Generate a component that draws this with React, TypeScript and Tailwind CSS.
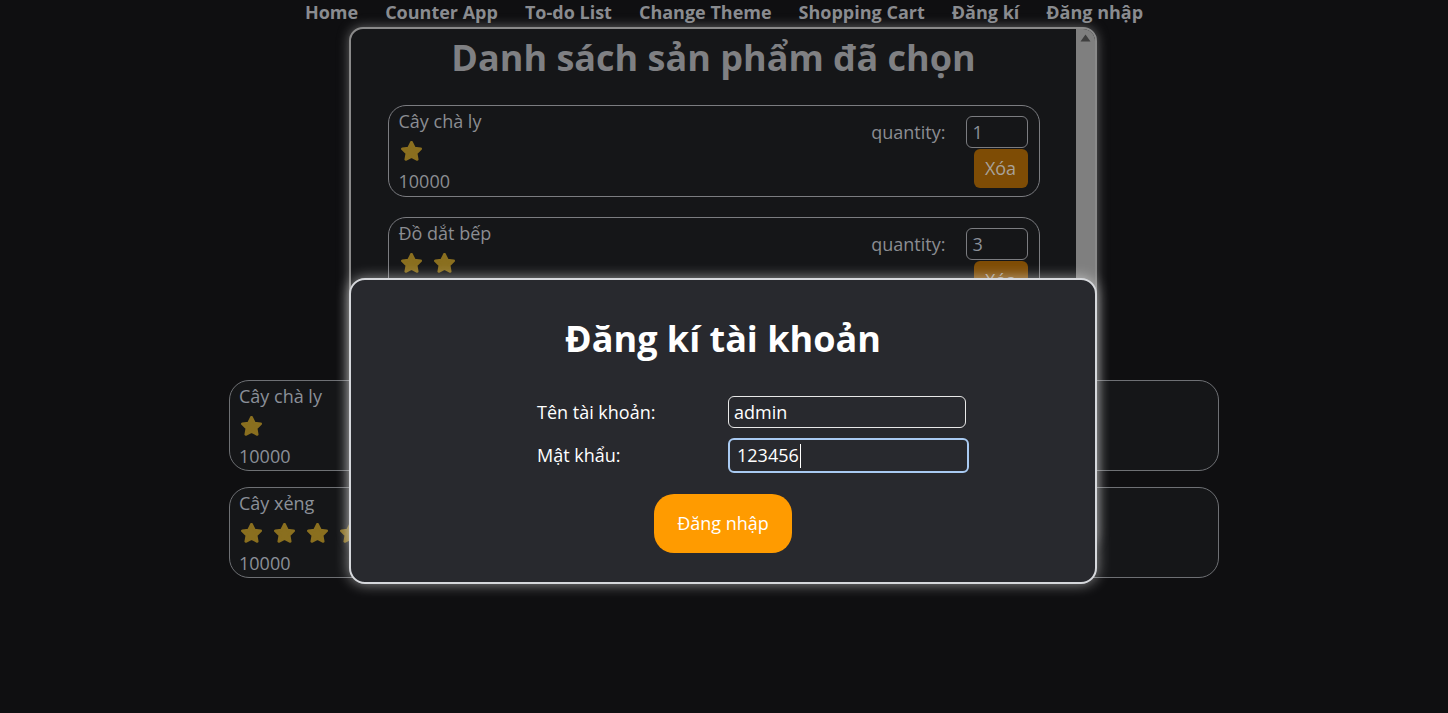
import React from "react";

const Star = ({ color = "#8a6f1f" }: { color?: string }) => (
  <svg width="21" height="21" viewBox="2.5 2.5 19 19" className="shrink-0">
    <path
      d="M12 3.6l2.6 5.2 5.7.8-4.1 4 1 5.6L12 16.5l-5.2 2.7 1-5.6-4.1-4 5.7-.8z"
      fill={color}
      stroke={color}
      strokeWidth="2.4"
      strokeLinejoin="round"
    />
  </svg>
);

const Stars = ({ n }: { n: number }) => (
  <div className="flex items-center gap-[12px] pl-[2px]">
    {Array.from({ length: n }).map((_, i) => (
      <Star key={i} />
    ))}
  </div>
);

const BackCard = ({ name, stars }: { name: string; stars: number }) => (
  <div className="w-[990px] h-[91px] rounded-[20px] border border-[#6e7074] bg-[#151618] px-[9px] text-[#8b9098] text-[18px]">
    <div className="h-[30px] flex items-center">{name}</div>
    <div className="h-[30px] flex items-center">
      <Stars n={stars} />
    </div>
    <div className="h-[30px] flex items-center">10000</div>
  </div>
);

const CartCard = ({ name, stars, qty }: { name: string; stars: number; qty: string }) => (
  <div className="w-[652px] h-[92px] rounded-[18px] border border-[#7b7c80] flex justify-between text-[#8b8d92] text-[18px] shrink-0">
    <div className="pl-[10px]">
      <div className="h-[30px] flex items-center">{name}</div>
      <div className="h-[30px] flex items-center">
        <Stars n={stars} />
      </div>
      <div className="h-[30px] flex items-center">10000</div>
    </div>
    <div className="flex flex-col items-end pt-[10px] pr-[11px]">
      <div className="flex items-center gap-[20px]">
        <span>quantity:</span>
        <div className="w-[62px] h-[32px] rounded-[6px] border border-[#7b7c80] flex items-center pl-[6px] text-[#8b9098]">
          {qty}
        </div>
      </div>
      <div className="mt-[1px] w-[54px] h-[39px] rounded-[6px] bg-[#7e4c05] flex items-center justify-center text-[#a8a29a]">
        Xóa
      </div>
    </div>
  </div>
);

export default function App() {
  return (
    <div className="relative min-h-[713px] bg-[#0f0f11] font-['Segoe_UI','Open_Sans',sans-serif] overflow-hidden">
      <nav className="h-[25px] flex justify-center items-center gap-[27px] text-[18px] font-bold text-[#8a8c90]">
        <span>Home</span>
        <span>Counter App</span>
        <span>To-do List</span>
        <span>Change Theme</span>
        <span>Shopping Cart</span>
        <span>Đăng kí</span>
        <span>Đăng nhập</span>
      </nav>

      <main className="flex flex-col items-center gap-[16px] pt-[355px]">
        <BackCard name="Cây chà ly" stars={1} />
        <BackCard name="Cây xẻng" stars={4} />
      </main>

      {/* Cart modal (dimmed) */}
      <div className="absolute left-[349px] top-[27px] w-[748px] h-[520px] rounded-[14px] border-2 border-[#8a8a8a] bg-[#151618] shadow-[0_0_12px_rgba(170,170,170,0.55)] flex overflow-hidden">
        <div className="flex-1 flex flex-col items-center">
          <h2 className="text-[36px] font-bold text-[#7f8083] leading-[48px] mt-[5px]">
            Danh sách sản phẩm đã chọn
          </h2>
          <div className="flex flex-col gap-[20px] mt-[23px]">
            <CartCard name="Cây chà ly" stars={1} qty="1" />
            <CartCard name="Đồ dắt bếp" stars={2} qty="3" />
          </div>
        </div>
        <div className="w-[19px] bg-[#7f7f7f] flex justify-center pt-[5px]">
          <svg width="11" height="8" viewBox="0 0 11 8">
            <path d="M5.5 0.5L10.5 7.5H0.5z" fill="#3f3f3f" />
          </svg>
        </div>
      </div>

      {/* Register modal */}
      <div className="absolute left-[349px] top-[278px] w-[748px] h-[306px] rounded-[16px] border-2 border-[#d6d8dc] bg-[#28292e] shadow-[0_0_14px_rgba(255,255,255,0.55)]">
        <h1 className="mt-[35px] text-center text-[36px] font-bold text-white leading-[48px]">
          Đăng kí tài khoản
        </h1>
        <div className="ml-[186px] mt-[33px] flex flex-col gap-[10px] text-[18px] text-white">
          <div className="flex items-center">
            <span className="w-[191px]">Tên tài khoản:</span>
            <div className="w-[238px] h-[32px] rounded-[6px] border border-[#e8e8e8] flex items-center pl-[5px]">
              admin
            </div>
          </div>
          <div className="flex items-center">
            <span className="w-[191px]">Mật khẩu:</span>
            <div className="w-[241px] h-[35px] rounded-[6px] border-2 border-[#a9caf2] flex items-center pl-[7px]">
              123456
              <span className="w-[1px] h-[24px] bg-white ml-[1px]" />
            </div>
          </div>
        </div>
        <div className="flex justify-center mt-[21px]">
          <button className="w-[138px] h-[59px] rounded-[20px] bg-[#ff9b00] text-white text-[18px]">
            Đăng nhập
          </button>
        </div>
      </div>
    </div>
  );
}
